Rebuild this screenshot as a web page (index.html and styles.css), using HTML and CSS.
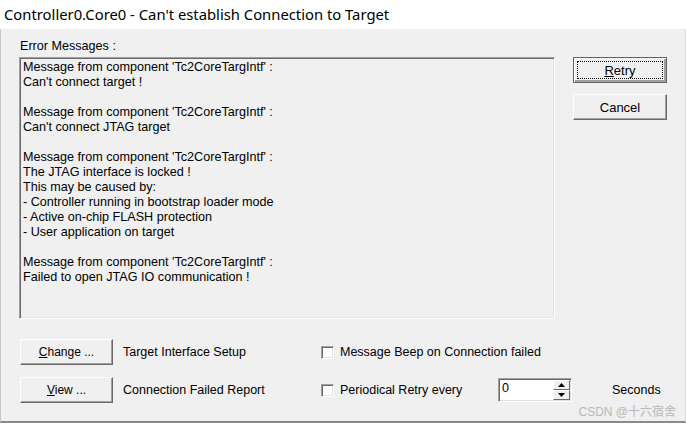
FILE: index.html
```html
<!DOCTYPE html>
<html>
<head>
<meta charset="utf-8">
<link rel="stylesheet" href="styles.css">
</head>
<body>
<div class="window">
  <div class="titlebar">Controller0.Core0 - Can't establish Connection to Target</div>
  <div class="client">
    <div class="top">
      <div class="msgcol">
        <div class="caption">Error Messages :</div>
        <div class="msgbox">
          <div>Message from component 'Tc2CoreTargIntf' :</div>
          <div>Can't connect target !</div>
          <div>&nbsp;</div>
          <div>Message from component 'Tc2CoreTargIntf' :</div>
          <div>Can't connect JTAG target</div>
          <div>&nbsp;</div>
          <div>Message from component 'Tc2CoreTargIntf' :</div>
          <div>The JTAG interface is locked !</div>
          <div>This may be caused by:</div>
          <div>- Controller running in bootstrap loader mode</div>
          <div>- Active on-chip FLASH protection</div>
          <div>- User application on target</div>
          <div>&nbsp;</div>
          <div>Message from component 'Tc2CoreTargIntf' :</div>
          <div>Failed to open JTAG IO communication !</div>
        </div>
      </div>
      <div class="btncol">
        <div class="btn default"><span class="focus"><u>R</u>etry</span></div>
        <div class="btn">Cancel</div>
      </div>
    </div>
    <div class="bottom">
      <div class="btn small"><span><u>C</u>hange ...</span></div>
      <div class="lbl pad">Target Interface Setup</div>
      <div class="chk"></div>
      <div class="lbl">Message Beep on Connection failed</div>
      <div></div>
      <div></div>

      <div class="btn small"><span><u>V</u>iew ...</span></div>
      <div class="lbl pad">Connection Failed Report</div>
      <div class="chk"></div>
      <div class="lbl">Periodical Retry every</div>
      <div class="spin">
        <div class="spinval">0</div>
        <div class="spinbtns">
          <div class="sb"><svg width="7" height="4" viewBox="0 0 7 4"><path d="M0 4 L3.5 0 L7 4 Z" fill="#000"/></svg></div>
          <div class="sb"><svg width="7" height="4" viewBox="0 0 7 4"><path d="M0 0 L3.5 4 L7 0 Z" fill="#000"/></svg></div>
        </div>
      </div>
      <div class="lbl secs">Seconds</div>
    </div>
    <div class="watermark">CSDN @十六宿舍</div>
  </div>
</div>
</body>
</html>
```

FILE: styles.css
```css
html, body {
  margin: 0;
  padding: 0;
  background: #ffffff;
}
body {
  width: 686px;
  height: 426px;
  overflow: hidden;
  font-family: "Liberation Sans", Arial, sans-serif;
  font-size: 12px;
  color: #000;
}
.window {
  width: 686px;
  height: 423px;
  display: flex;
  flex-direction: column;
}
.titlebar {
  height: 29px;
  box-sizing: border-box;
  padding: 4px 0 0 4px;
  background: #fff;
  font-family: "Noto Sans", "Open Sans", sans-serif;
  font-size: 14.8px;
  line-height: 20px;
  color: #000;
  white-space: nowrap;
}
.client {
  position: relative;
  flex: 1;
  background: #f0f0f0;
  border-left: 1px solid #c8c8c8;
  border-right: 1px solid #dcdcdc;
  border-bottom: 2px solid #8a8a8a;
  box-sizing: border-box;
  padding: 10px 0 0 18px;
}
.top {
  display: flex;
  align-items: flex-start;
}
.msgcol {
  display: flex;
  flex-direction: column;
}
.caption {
  height: 18px;
  line-height: 14px;
  padding-left: 1px;
  font-size: 12.6px;
}
.msgbox {
  width: 536px;
  height: 262px;
  box-sizing: border-box;
  border-top: 1px solid #a0a0a0;
  border-left: 1px solid #a0a0a0;
  border-right: 1px solid #fff;
  border-bottom: 1px solid #fff;
  box-shadow: inset 1px 1px 0 #696969, inset -1px -1px 0 #e3e3e3;
  padding: 2px 0 0 3px;
  font-size: 12.6px;
  line-height: 15px;
  white-space: nowrap;
}
.btncol {
  display: flex;
  flex-direction: column;
  gap: 11px;
  margin-left: 18px;
  padding-top: 18px;
}
.btn {
  width: 94px;
  height: 26px;
  box-sizing: border-box;
  display: flex;
  align-items: center;
  justify-content: center;
  background: #f0f0f0;
  border-top: 1px solid #fff;
  border-left: 1px solid #fff;
  border-right: 1px solid #696969;
  border-bottom: 1px solid #696969;
  box-shadow: inset -1px -1px 0 #a0a0a0;
  font-size: 13px;
}
.btn.default {
  border: 1px solid #646464;
  box-shadow: inset 1px 1px 0 #fff, inset -2px -2px 0 #a0a0a0;
  padding: 3px;
}
.btn .focus {
  flex: 1;
  align-self: stretch;
  display: flex;
  align-items: center;
  justify-content: center;
  border: 1px dotted #000;
}
.bottom {
  display: grid;
  grid-template-columns: 93px 208px 19px 158px 74px auto;
  grid-template-rows: 26px 26px;
  row-gap: 12px;
  align-items: center;
  margin-top: 20px;
  padding-left: 1px;
}
.btn.small {
  width: 93px;
  height: 26px;
  font-size: 12px;
}
.lbl {
  font-size: 12.5px;
  white-space: nowrap;
}
.pad {
  padding-left: 10px;
}
.chk {
  width: 13px;
  height: 13px;
  box-sizing: border-box;
  background: #fff;
  border-top: 1px solid #a0a0a0;
  border-left: 1px solid #a0a0a0;
  border-right: 1px solid #fff;
  border-bottom: 1px solid #fff;
  box-shadow: inset 1px 1px 0 #696969, inset -1px -1px 0 #e3e3e3;
}
.spin {
  width: 74px;
  height: 24px;
  box-sizing: border-box;
  display: flex;
  background: #fff;
  border-top: 1px solid #a0a0a0;
  border-left: 1px solid #a0a0a0;
  border-right: 1px solid #fff;
  border-bottom: 1px solid #fff;
  box-shadow: inset 1px 1px 0 #696969, inset -1px -1px 0 #e3e3e3;
}
.spinval {
  flex: 1;
  padding: 2px 0 0 3px;
  font-size: 12.5px;
}
.spinbtns {
  width: 17px;
  display: flex;
  flex-direction: column;
  padding: 1px 1px 1px 0;
}
.sb {
  flex: 1;
  display: flex;
  align-items: center;
  justify-content: center;
  background: #f0f0f0;
  border-top: 1px solid #fff;
  border-left: 1px solid #fff;
  border-right: 1px solid #696969;
  border-bottom: 1px solid #696969;
}
.secs {
  padding-left: 40px;
}
.watermark {
  position: absolute;
  right: 9px;
  bottom: 2px;
  font-family: "Liberation Sans", "Noto Sans CJK SC", sans-serif;
  font-size: 12px;
  color: #b8b8b8;
}
```
